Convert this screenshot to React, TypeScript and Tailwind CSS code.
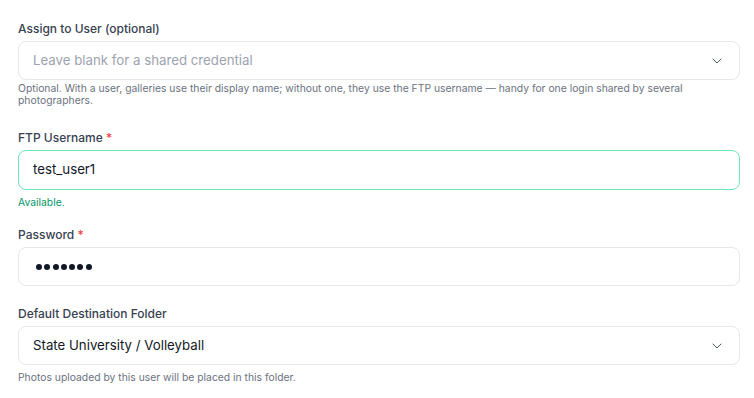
import React from "react";

function Chevron() {
  return (
    <svg width="16" height="16" viewBox="0 0 24 24" fill="none" stroke="#4b5563" strokeWidth="1.5" strokeLinecap="round" strokeLinejoin="round">
      <path d="m6 9 6 6 6-6" />
    </svg>
  );
}

function Dots({ n }: { n: number }) {
  return (
    <span className="flex items-center gap-[2.3px]" aria-label="password">
      {Array.from({ length: n }).map((_, i) => (
        <span key={i} className="block w-[6px] h-[6px] rounded-full bg-[#111827]" />
      ))}
    </span>
  );
}

export default function App() {
  return (
    <div
      className="w-[754px] h-[398px] bg-white pl-[18px] pr-[14px] pt-[19px]"
      style={{ fontFamily: "Inter, 'Noto Sans', sans-serif" }}
    >
      {/* Field 1 */}
      <div className="flex flex-col">
        <label className="text-[12px] leading-5 font-medium text-[#374151]">Assign to User (optional)</label>
        <div className="mt-[2px] h-[39px] rounded-lg border border-[#e5e7eb] flex items-center justify-between pl-[14px] pr-[14px]">
          <span className="text-[13.25px] text-[#9ca3af]">Leave blank for a shared credential</span>
          <Chevron />
        </div>
        <p className="mt-[3px] text-[10.35px] leading-[11.5px] text-[#6b7280]">
          Optional. With a user, galleries use their display name; without one, they use the FTP username — handy for one login shared by several photographers.
        </p>
      </div>

      {/* Field 2 */}
      <div className="flex flex-col mt-[22px]">
        <label className="text-[12px] leading-5 font-medium text-[#374151]">
          FTP Username <span className="text-[#ef4444]">*</span>
        </label>
        <div className="mt-[2px] h-[40px] rounded-lg border border-[#6ee7b7] flex items-center pl-[14px] pr-[14px]">
          <span className="text-[13.25px] text-[#111827]">test_user1</span>
        </div>
        <p className="mt-[6px] text-[10.35px] leading-[12px] text-[#059669]">Available.</p>
      </div>

      {/* Field 3 */}
      <div className="flex flex-col mt-[17px]">
        <label className="text-[12px] leading-5 font-medium text-[#374151]">
          Password <span className="text-[#ef4444]">*</span>
        </label>
        <div className="mt-[2px] h-[39px] rounded-lg border border-[#e5e7eb] flex items-center pl-[17px] pr-[14px]">
          <Dots n={7} />
        </div>
      </div>

      {/* Field 4 */}
      <div className="flex flex-col mt-[18px]">
        <label className="text-[12px] leading-5 font-medium text-[#374151]">Default Destination Folder</label>
        <div className="mt-[2px] h-[39px] rounded-lg border border-[#e5e7eb] flex items-center justify-between pl-[14px] pr-[14px]">
          <span className="text-[13.25px] text-[#111827]">State University / Volleyball</span>
          <Chevron />
        </div>
        <p className="mt-[6px] text-[10.35px] leading-[12px] text-[#6b7280]">Photos uploaded by this user will be placed in this folder.</p>
      </div>
    </div>
  );
}
